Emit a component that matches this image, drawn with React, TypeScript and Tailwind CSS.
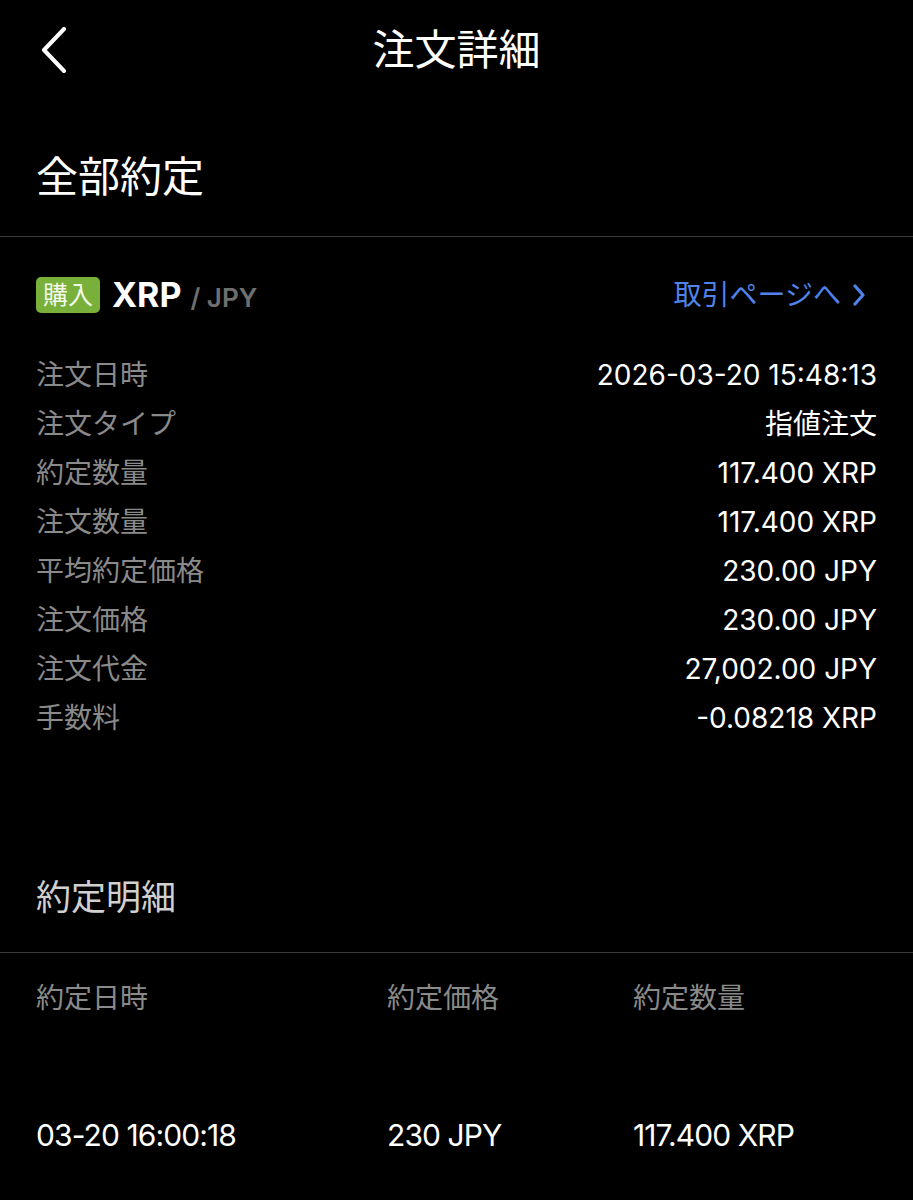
import React from "react";

const rows: [string, string][] = [
  ["注文日時", "2026-03-20 15:48:13"],
  ["注文タイプ", "指値注文"],
  ["約定数量", "117.400 XRP"],
  ["注文数量", "117.400 XRP"],
  ["平均約定価格", "230.00 JPY"],
  ["注文価格", "230.00 JPY"],
  ["注文代金", "27,002.00 JPY"],
  ["手数料", "-0.08218 XRP"],
];

function BackIcon() {
  return (
    <svg width="28" height="46" viewBox="0 0 28 46" fill="none">
      <path d="M24 2 L4 23 L24 44" stroke="white" strokeWidth="4" strokeLinecap="round" strokeLinejoin="round" />
    </svg>
  );
}

function ChevronRight() {
  return (
    <svg width="14" height="22" viewBox="0 0 14 22" fill="none">
      <path d="M3 2 L11 11 L3 20" stroke="#4f83ea" strokeWidth="3.2" strokeLinecap="round" strokeLinejoin="round" />
    </svg>
  );
}

export default function App() {
  return (
    <div
      className="w-[913px] min-h-[1200px] bg-black text-white"
      style={{ fontFamily: 'Inter, "Noto Sans CJK JP", sans-serif' }}
    >
      {/* header */}
      <div className="h-[100px] grid grid-cols-[1fr_auto_1fr] items-center px-[40px]">
        <div className="flex items-center">
          <BackIcon />
        </div>
        <h1 className="text-[42px] leading-none font-normal">注文詳細</h1>
        <div />
      </div>

      {/* status */}
      <div className="h-[137px] pt-[53px] px-[36px] border-b border-[#3a3a3a]">
        <div className="text-[42px] leading-[48px]">全部約定</div>
      </div>

      {/* pair */}
      <div className="mt-[40px] px-[36px] flex items-center justify-between h-[36px]">
        <div className="flex items-center">
          <span className="h-[36px] w-[64px] rounded-[5px] bg-[#79b03a] text-[25px] leading-[36px] text-center text-[#f2f8ea]">
            購入
          </span>
          <span className="ml-[12px] text-[34px] font-bold leading-none">XRP</span>
          <span className="ml-[9px] mt-[6px] text-[26px] font-semibold leading-none text-[#6f6f6f]">/ JPY</span>
        </div>
        <div className="flex items-center gap-[11px] pr-[11px] text-[#4f83ea]">
          <span className="text-[28px] leading-none">取引ページへ</span>
          <ChevronRight />
        </div>
      </div>

      {/* detail rows */}
      <div className="mt-[37px] px-[36px]">
        {rows.map(([label, value]) => (
          <div key={label} className="h-[49px] flex items-center justify-between">
            <span className="text-[28px] text-[#8a8a8a]">{label}</span>
            <span className="text-[28px] text-white">{value}</span>
          </div>
        ))}
      </div>

      {/* fills */}
      <div className="mt-[131px] h-[80px] px-[36px] border-b border-[#3a3a3a]">
        <div className="text-[35px] leading-[48px] text-[#d0d0d0]">約定明細</div>
      </div>

      <div className="px-[36px] grid grid-cols-[351px_246px_1fr]">
        <div className="h-[90px] flex items-center text-[28px] text-[#8a8a8a]">約定日時</div>
        <div className="h-[90px] flex items-center text-[28px] text-[#8a8a8a]">約定価格</div>
        <div className="h-[90px] flex items-center text-[28px] text-[#8a8a8a]">約定数量</div>
        <div className="mt-[68px] h-[49px] flex items-center text-[30px] tracking-[-0.9px]">03-20 16:00:18</div>
        <div className="mt-[68px] h-[49px] flex items-center text-[30px] tracking-[-0.9px]">230 JPY</div>
        <div className="mt-[68px] h-[49px] flex items-center text-[30px] tracking-[-0.9px]">117.400 XRP</div>
      </div>
    </div>
  );
}
